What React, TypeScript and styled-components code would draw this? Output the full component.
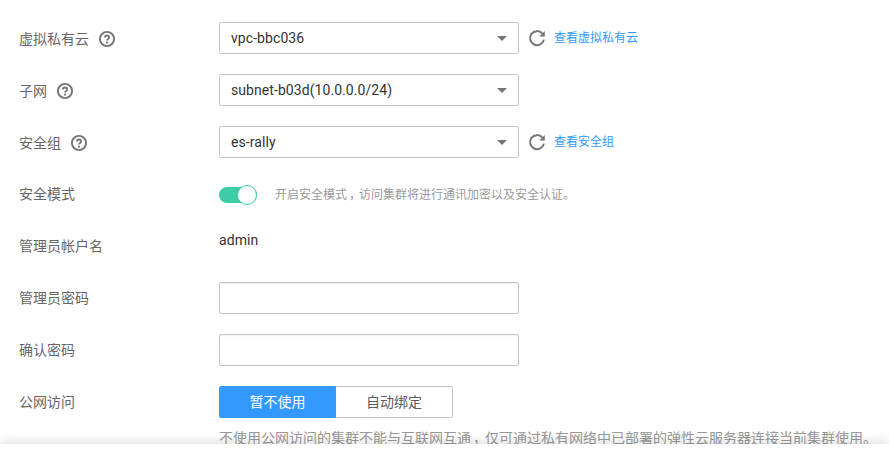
import React from 'react';
import styled, { createGlobalStyle } from 'styled-components';

const GlobalStyle = createGlobalStyle`
  * { box-sizing: border-box; }
  body {
    margin: 0;
    background: #fff;
    font-family: Roboto, "Noto Sans CJK SC", sans-serif;
    font-size: 14px;
  }
`;

const Page = styled.div`
  display: flex;
  flex-direction: column;
  height: 456px;
  overflow: hidden;
`;

const Form = styled.main`
  display: flex;
  flex-direction: column;
  gap: 20px;
  height: 444px;
  flex: none;
  padding: 22px 0 0 19px;
`;

const Footer = styled.footer`
  position: relative;
  flex: 1;
  background: #fff;
  box-shadow: 0 -2px 12px rgba(0, 0, 0, 0.14);
`;

const Row = styled.div`
  display: grid;
  grid-template-columns: 200px 1fr;
  flex: none;
`;

const Label = styled.div<{ $withHelp?: boolean }>`
  display: flex;
  align-items: center;
  gap: 10px;
  height: 32px;
  padding-top: ${(p) => (p.$withHelp ? '2px' : '0')};
  line-height: 20px;
  color: #666;
`;

const LabelText = styled.span`
  white-space: nowrap;
`;

const Field = styled.div`
  display: flex;
  align-items: center;
  height: 32px;
`;

const Select = styled.button`
  display: flex;
  align-items: center;
  justify-content: space-between;
  width: 300px;
  height: 32px;
  padding: 0 11px;
  border: 1px solid #c5c5c5;
  border-radius: 2px;
  background: #fff;
  color: #333;
  font: inherit;
  letter-spacing: 0.07px;
`;

const Caret = styled.svg`
  width: 10px;
  height: 5px;
  fill: #757575;
`;

const Icon = styled.svg`
  display: block;
  flex: none;
  overflow: visible;
`;

const Refresh = styled(Icon)`
  margin-left: 10px;
`;

const Link = styled.a`
  margin-left: 9px;
  color: #3399ff;
  font-size: 12px;
  line-height: 16px;
  text-decoration: none;
`;

const Switch = styled.div`
  display: flex;
  align-items: center;
  justify-content: flex-end;
  width: 38px;
  height: 16px;
  margin-top: 2px;
  border-radius: 8px;
  background: #3dcca6;
`;

const Knob = styled.span`
  flex: none;
  width: 20px;
  height: 20px;
  border: 1px solid #3dcca6;
  border-radius: 50%;
  background: #fff;
`;

const SwitchNote = styled.span`
  margin-left: 18px;
  padding-top: 2px;
  color: #999;
  font-size: 12px;
  line-height: 16px;
`;

const Comma = styled.span`
  margin-right: -2px;
  padding-left: 2px;
`;

const Account = styled.div`
  height: 20px;
  line-height: 20px;
  color: #333;
  letter-spacing: 0.1px;
`;

const Input = styled.input`
  width: 300px;
  height: 32px;
  padding: 0 11px;
  border: 1px solid #c5c5c5;
  border-radius: 2px;
  box-shadow: inset 0 1px 2px rgba(0, 0, 0, 0.06);
  outline: none;
  font: inherit;
`;

const Choice = styled.button<{ $active?: boolean }>`
  width: 117px;
  height: 32px;
  padding: 0;
  border: 1px solid ${(p) => (p.$active ? '#3399ff' : '#c5c5c5')};
  border-left-width: ${(p) => (p.$active ? '1px' : '0')};
  border-radius: ${(p) => (p.$active ? '2px 0 0 2px' : '0 2px 2px 0')};
  background: ${(p) => (p.$active ? '#3399ff' : '#fff')};
  color: ${(p) => (p.$active ? '#fff' : '#5c5c5c')};
  font: inherit;
  line-height: 20px;
`;

const Hint = styled.p`
  margin: 10px 0 0;
  color: #999;
  line-height: 20px;
  white-space: nowrap;
`;

const HelpIcon = () => (
  <Icon width="16" height="16" viewBox="0 0 16 16" fill="none" stroke="#757575">
    <circle cx="8" cy="8" r="7.1" strokeWidth="1.9" />
    <path d="M5.9 6.6C5.9 5.2 6.8 4.5 8 4.5s2.1.8 2.1 1.9c0 1.5-2.1 1.6-2.1 3.2" strokeWidth="1.8" />
    <path d="M7 11.6h2" strokeWidth="1.8" />
  </Icon>
);

const RefreshIcon = () => (
  <Refresh width="16" height="16" viewBox="0 0 16 16" fill="none">
    <path d="M13.4 3.6A7 7 0 1 0 14.9 9.6" stroke="#757575" strokeWidth="2" />
    <path d="M15.8 1V6.4H10.4Z" fill="#757575" />
  </Refresh>
);

const networkRows = [
  { label: '虚拟私有云', value: 'vpc-bbc036', link: '查看虚拟私有云' },
  { label: '子网', value: 'subnet-b03d(10.0.0.0/24)' },
  { label: '安全组', value: 'es-rally', link: '查看安全组' },
];

export default function App() {
  return (
    <Page>
      <GlobalStyle />
      <Form>
        {networkRows.map(({ label, value, link }) => (
          <Row key={label}>
            <Label $withHelp>
              <LabelText>{label}</LabelText>
              <HelpIcon />
            </Label>
            <Field>
              <Select type="button">
                {value}
                <Caret viewBox="0 0 10 5">
                  <path d="M0 0H10L5 5Z" />
                </Caret>
              </Select>
              {link && <RefreshIcon />}
              {link && <Link>{link}</Link>}
            </Field>
          </Row>
        ))}
        <Row>
          <Label>安全模式</Label>
          <Field>
            <Switch role="switch" aria-checked="true">
              <Knob />
            </Switch>
            <SwitchNote>
              开启安全模式<Comma>，</Comma>访问集群将进行通讯加密以及安全认证。
            </SwitchNote>
          </Field>
        </Row>
        <Row>
          <Label>管理员帐户名</Label>
          <Account>admin</Account>
        </Row>
        <Row>
          <Label>管理员密码</Label>
          <Input type="password" />
        </Row>
        <Row>
          <Label>确认密码</Label>
          <Input type="password" />
        </Row>
        <Row>
          <Label>公网访问</Label>
          <div>
            <Field>
              <Choice type="button" $active>暂不使用</Choice>
              <Choice type="button">自动绑定</Choice>
            </Field>
            <Hint>
              不使用公网访问的集群不能与互联网互通<Comma>，</Comma>仅可通过私有网络中已部署的弹性云服务器连接当前集群使用。
            </Hint>
          </div>
        </Row>
      </Form>
      <Footer />
    </Page>
  );
}
